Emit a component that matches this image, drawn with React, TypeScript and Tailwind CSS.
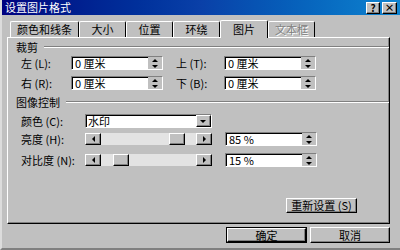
import React from 'react';

const font = { fontFamily: '"Noto Sans CJK SC", "Liberation Sans", sans-serif' };

const raised =
  'bg-[#c0c0c0] border border-t-white border-l-white border-b-black border-r-black shadow-[inset_-1px_-1px_#808080]';
const sunken =
  'border border-t-[#808080] border-l-[#808080] border-b-white border-r-white shadow-[inset_1px_1px_#000]';

const Arrow = ({ dir }: { dir: 'up' | 'down' | 'left' | 'right' }) => {
  const pts = {
    up: '0,4 3,1 6,4',
    down: '0,1 3,4 6,1',
    left: '4,0 1,3 4,6',
    right: '1,0 4,3 1,6',
  }[dir];
  const horiz = dir === 'left' || dir === 'right';
  return (
    <svg width={horiz ? 5 : 7} height={horiz ? 7 : 5} viewBox={horiz ? '0 0 5 7' : '0 0 7 5'}>
      <polygon points={pts} fill="#000" />
    </svg>
  );
};

const SpinInput = ({ value }: { value: string }) => (
  <div className={`w-[92px] h-[14px] bg-white flex items-center ${sunken}`}>
    <span className="flex-1 pl-[3px] text-[11px] leading-none text-black">{value}</span>
    <div className="w-[14px] h-full flex flex-col items-center justify-center bg-[#c0c0c0] gap-[1px]">
      <Arrow dir="up" />
      <Arrow dir="down" />
    </div>
  </div>
);

const Scroll = ({ pos }: { pos: number }) => (
  <div className="w-[127px] h-[12px] flex bg-[#e3e3e3] relative">
    <div className={`w-[16px] h-full flex items-center justify-center ${raised}`}>
      <Arrow dir="left" />
    </div>
    <div className="flex-1" />
    <div className={`w-[16px] h-full flex items-center justify-center ${raised}`}>
      <Arrow dir="right" />
    </div>
    <div className={`absolute top-0 w-[16px] h-full ${raised}`} style={{ left: pos }} />
  </div>
);

const Group = ({ title }: { title: string }) => (
  <div className="flex items-center gap-[6px] pl-[8px] pr-0 h-[14px]">
    <span className="text-[11px] leading-none">{title}</span>
    <div className="flex-1 border-t border-t-[#808080] border-b border-b-white" />
  </div>
);

const Label = ({ text, w }: { text: string; w: string }) => (
  <span className={`text-[11px] leading-none pl-[13px] ${w}`}>{text}</span>
);

export default function App() {
  const tabs = ['颜色和线条', '大小', '位置', '环绕'];
  return (
    <div
      className="w-[400px] h-[250px] bg-[#c0c0c0] overflow-hidden border-l-2 border-l-[#dcdcdc] border-b-2 border-b-[#808080] text-black"
      style={font}
    >
      <div className="h-[15px] flex items-center bg-gradient-to-r from-[#000080] via-[#0a40a8] to-[#1084d0] pl-[3px] pr-[3px]">
        <span className="text-white text-[11px] leading-none flex-1">设置图片格式</span>
        <div className={`w-[14px] h-[12px] flex items-center justify-center text-[10px] font-bold leading-none ${raised}`}>?</div>
        <div className={`ml-[2px] w-[15px] h-[12px] flex items-center justify-center text-[10px] font-bold leading-none ${raised}`}>×</div>
      </div>

      <div className="h-[22px] flex items-end pl-[8px]">
        {tabs.map((t, i) => (
          <div
            key={t}
            className={`h-[16px] flex items-center justify-center text-[11px] leading-none border-t border-l border-r border-t-white border-l-white border-r-black rounded-t-[2px] ${
              i === 0 ? 'w-[69px]' : 'w-[47px]'
            }`}
          >
            {t}
          </div>
        ))}
        <div className="w-[48px] h-[18px] mb-[-1px] z-10 bg-[#c0c0c0] flex items-center justify-center text-[11px] leading-none border-t border-l border-r border-t-white border-l-white border-r-black rounded-t-[2px]">
          图片
        </div>
        <div className="w-[47px] h-[16px] flex items-center justify-center text-[11px] leading-none text-[#808080] [text-shadow:1px_1px_#fff] border-t border-l border-r border-t-white border-l-white border-r-black rounded-t-[2px]">
          文本框
        </div>
      </div>

      <div className="ml-[5px] w-[383px] h-[187px] border border-t-white border-l-white border-r-black border-b-black shadow-[inset_-1px_-1px_#808080] flex flex-col pt-[2px]">
        <Group title="裁剪" />
        <div className="flex items-center mt-[2px] h-[14px]">
          <Label text="左 (L):" w="w-[63px]" />
          <SpinInput value="0 厘米" />
          <Label text="上 (T):" w="w-[61px]" />
          <SpinInput value="0 厘米" />
        </div>
        <div className="flex items-center mt-[6px] h-[14px]">
          <Label text="右 (R):" w="w-[63px]" />
          <SpinInput value="0 厘米" />
          <Label text="下 (B):" w="w-[61px]" />
          <SpinInput value="0 厘米" />
        </div>
        <div className="mt-[5px]">
          <Group title="图像控制" />
        </div>
        <div className="flex items-center mt-[5px] h-[14px]">
          <Label text="颜色 (C):" w="w-[77px]" />
          <div className={`w-[127px] h-[14px] bg-white flex items-center ${sunken}`}>
            <span className="flex-1 pl-[2px] text-[11px] leading-none">水印</span>
            <div className={`w-[15px] h-[12px] flex items-center justify-center ${raised}`}>
              <Arrow dir="down" />
            </div>
          </div>
        </div>
        <div className="flex items-center mt-[4px] h-[14px]">
          <Label text="亮度 (H):" w="w-[77px]" />
          <Scroll pos={84} />
          <div className="w-[13px]" />
          <SpinInput value="85 %" />
        </div>
        <div className="flex items-center mt-[7px] h-[14px]">
          <Label text="对比度 (N):" w="w-[77px]" />
          <Scroll pos={28} />
          <div className="w-[13px]" />
          <SpinInput value="15 %" />
        </div>
        <div className="flex-1" />
        <div className="flex justify-end pr-[32px] mb-[10px]">
          <div className={`w-[71px] h-[15px] flex items-center justify-center text-[11px] leading-none ${raised}`}>
            重新设置 (S)
          </div>
        </div>
      </div>

      <div className="flex justify-end gap-[3px] pr-[10px] mt-[3px]">
        <div className="w-[81px] h-[16px] border border-black">
          <div className={`w-full h-full flex items-center justify-center text-[11px] leading-none ${raised}`}>确定</div>
        </div>
        <div className={`w-[80px] h-[16px] flex items-center justify-center text-[11px] leading-none ${raised}`}>取消</div>
      </div>
    </div>
  );
}
